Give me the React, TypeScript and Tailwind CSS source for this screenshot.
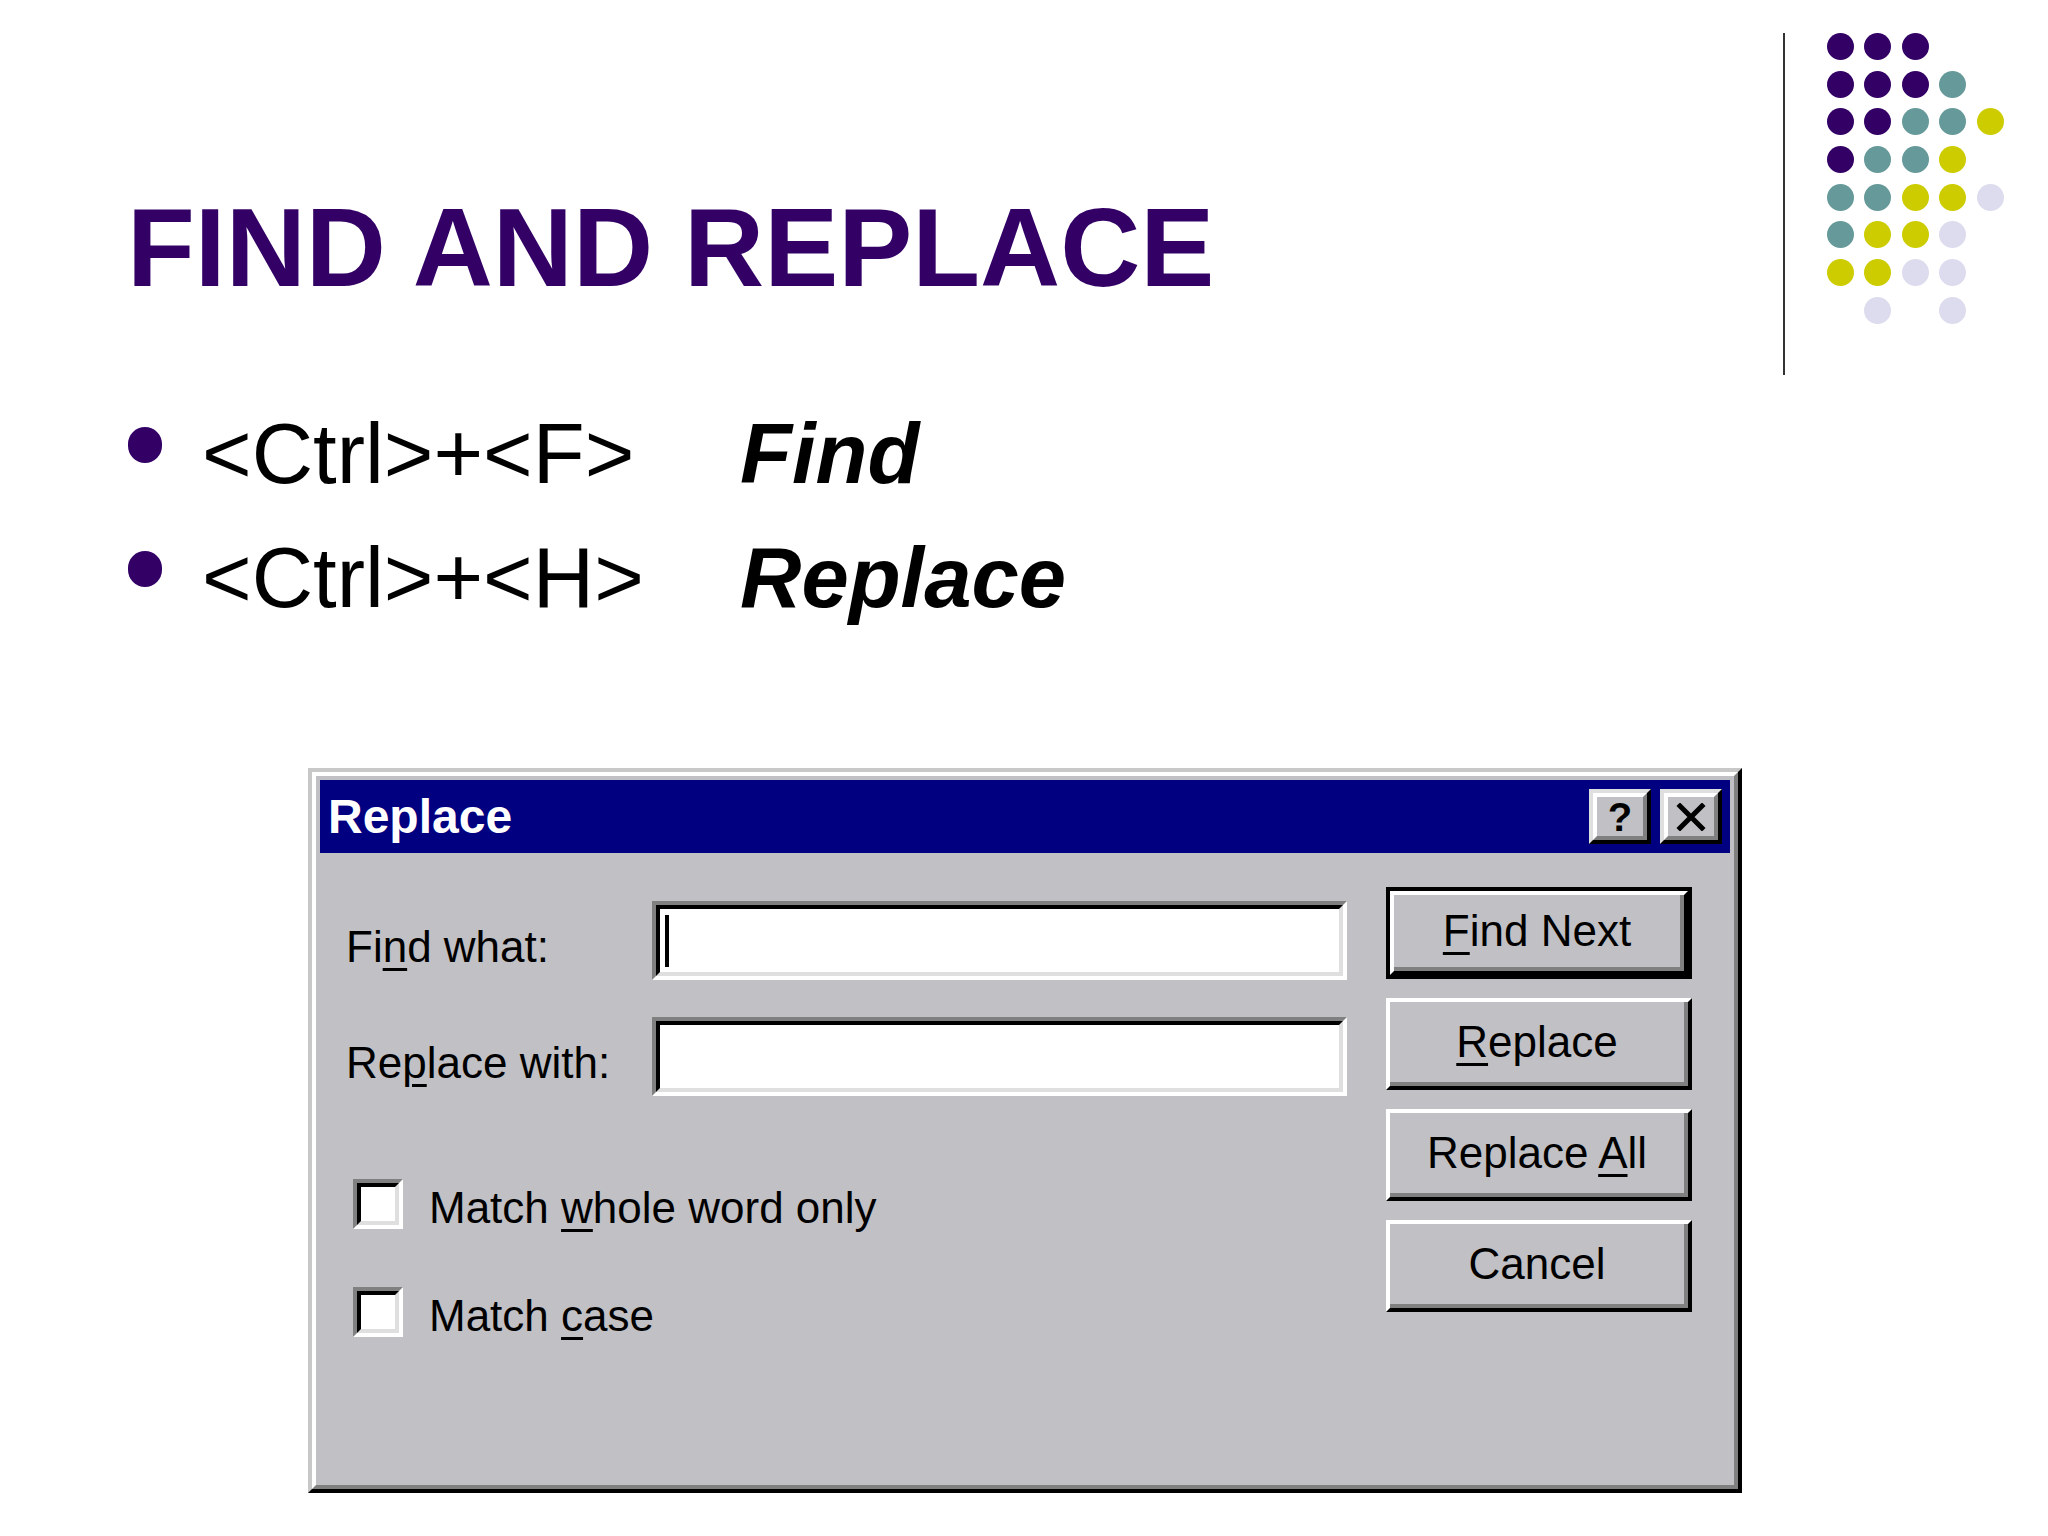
import React from "react";

// dot pattern in the top-right corner of the slide
const DOTS = [
  "PPP..",
  "PPPT.",
  "PPTTY",
  "PTTY.",
  "TTYYL",
  "TYYL.",
  "YYLL.",
  ".L.L.",
];

const DOT_COLOR: Record<string, string> = {
  P: "bg-[#330066]",
  T: "bg-[#669999]",
  Y: "bg-[#cccc00]",
  L: "bg-[#dcdcee]",
  ".": "bg-transparent",
};

function Sunken({ className, children }: { className: string; children?: React.ReactNode }) {
  return (
    <div
      className={`border-4 border-t-[#808080] border-l-[#808080] border-r-white border-b-white ${className}`}
    >
      <div className="w-full h-full border-4 border-t-black border-l-black border-r-[#dfdfdf] border-b-[#dfdfdf] bg-white flex items-center">
        {children}
      </div>
    </div>
  );
}

function Button({ children, isDefault = false }: { children: React.ReactNode; isDefault?: boolean }) {
  const face = (
    <div className="flex-1 flex border-4 border-t-white border-l-white border-r-black border-b-black">
      <div className="flex-1 flex items-center justify-center border-r-4 border-b-4 border-r-[#808080] border-b-[#808080] text-[44px] leading-none text-black">
        <span>{children}</span>
      </div>
    </div>
  );
  return isDefault ? (
    <div className="w-[306px] h-[92px] flex border-4 border-black">{face}</div>
  ) : (
    <div className="w-[306px] h-[92px] flex">{face}</div>
  );
}

function CaptionButton({ children }: { children: React.ReactNode }) {
  return (
    <div className="w-[62px] h-[55px] flex border-4 border-t-[#dfdfdf] border-l-[#dfdfdf] border-r-black border-b-black bg-[#c1c0c5]">
      <div className="flex-1 flex items-center justify-center border-4 border-t-white border-l-white border-r-[#808080] border-b-[#808080]">
        {children}
      </div>
    </div>
  );
}

function U({ children }: { children: React.ReactNode }) {
  return <span className="underline decoration-[3px] underline-offset-[6px]">{children}</span>;
}

function Checkbox({ children }: { children: React.ReactNode }) {
  return (
    <div className="flex items-center pl-[7px]">
      <Sunken className="w-[50px] h-[50px]" />
      <span className="ml-[26px] mt-[8px] text-[44px] leading-none text-black">{children}</span>
    </div>
  );
}

function ReplaceDialog() {
  return (
    <div className="ml-[308px] mt-[128px] w-[1434px] h-[725px] flex border-4 border-t-[#c8c8c8] border-l-[#c8c8c8] border-r-black border-b-black">
      <div className="flex-1 flex flex-col border-4 border-t-white border-l-white border-r-[#808080] border-b-[#808080] bg-[#c1c0c5] p-[4px]">
        {/* title bar */}
        <div className="h-[73px] bg-[#000080] flex items-center justify-between pl-[8px] pr-[8px]">
          <span className="text-[48px] font-bold text-white leading-none">Replace</span>
          <div className="flex gap-[9px]">
            <CaptionButton>
              <span className="text-[40px] font-bold leading-none text-black">?</span>
            </CaptionButton>
            <CaptionButton>
              <svg width="30" height="28" viewBox="0 0 30 28">
                <path d="M4 3 L26 25 M26 3 L4 25" stroke="black" strokeWidth="5" strokeLinecap="square" />
              </svg>
            </CaptionButton>
          </div>
        </div>

        {/* body */}
        <div className="flex-1 flex pl-[26px]">
          <div className="w-[1040px] pt-[48px] flex flex-col text-[44px] leading-none text-black">
            <div className="flex items-center h-[79px]">
              <span className="w-[306px] mt-[12px]">
                Fi<U>n</U>d what:
              </span>
              <Sunken className="w-[695px] h-[79px]">
                <div className="ml-[5px] w-[4px] h-[52px] bg-black" />
              </Sunken>
            </div>
            <div className="flex items-center h-[79px] mt-[37px]">
              <span className="w-[306px] mt-[12px]">
                Re<U>p</U>lace with:
              </span>
              <Sunken className="w-[695px] h-[79px]" />
            </div>
            <div className="mt-[82px]">
              <Checkbox>
                Match <U>w</U>hole word only
              </Checkbox>
            </div>
            <div className="mt-[56px]">
              <Checkbox>
                Match <U>c</U>ase
              </Checkbox>
            </div>
          </div>

          <div className="pt-[34px] flex flex-col gap-[19px]">
            <Button isDefault>
              <U>F</U>ind Next
            </Button>
            <Button>
              <U>R</U>eplace
            </Button>
            <Button>
              Replace <U>A</U>ll
            </Button>
            <Button>Cancel</Button>
          </div>
        </div>
      </div>
    </div>
  );
}

export default function App() {
  return (
    <div className="w-[2048px] h-[1536px] bg-white overflow-hidden font-['Liberation_Sans',Arial,sans-serif]">
      {/* header: title + decoration */}
      <div className="h-[392px] flex justify-between">
        <div className="pl-[127px] pt-[193px]">
          <h1 className="text-[111px] leading-none font-bold text-[#330066]">FIND AND REPLACE</h1>
        </div>
        <div className="flex pt-[33px] pr-[44px]">
          <div className="w-[2px] h-[342px] bg-[#333333]" />
          <div className="ml-[42px] grid grid-cols-[repeat(5,27px)] gap-x-[10.6px] gap-y-[10.7px] content-start">
            {DOTS.flatMap((row, r) =>
              row.split("").map((c, i) => (
                <div key={`${r}-${i}`} className={`w-[27px] h-[27px] rounded-full ${DOT_COLOR[c]}`} />
              ))
            )}
          </div>
        </div>
      </div>

      {/* bullets */}
      <div className="pl-[128px] text-[85px] leading-[124px] text-black">
        <div className="flex items-start h-[124px]">
          <div className="mt-[35px] w-[34px] h-[36px] rounded-full bg-[#330066]" />
          <span className="ml-[40px] w-[538px]">&lt;Ctrl&gt;+&lt;F&gt;</span>
          <span className="font-bold italic">Find</span>
        </div>
        <div className="flex items-start h-[124px]">
          <div className="mt-[35px] w-[34px] h-[36px] rounded-full bg-[#330066]" />
          <span className="ml-[40px] w-[538px]">&lt;Ctrl&gt;+&lt;H&gt;</span>
          <span className="font-bold italic">Replace</span>
        </div>
      </div>

      <ReplaceDialog />
    </div>
  );
}
